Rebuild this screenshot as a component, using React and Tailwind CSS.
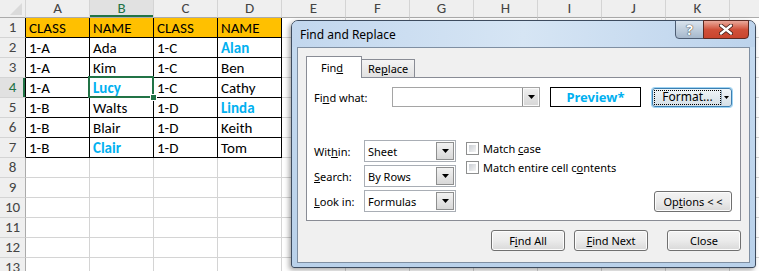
import React from "react";

const COLS = ["A", "B", "C", "D", "E", "F", "G", "H", "I", "J", "K", "L"];

// "*" suffix marks the light-blue bold names
const DATA = [
  ["CLASS", "NAME", "CLASS", "NAME"],
  ["1-A", "Ada", "1-C", "Alan*"],
  ["1-A", "Kim", "1-C", "Ben"],
  ["1-A", "Lucy*", "1-C", "Cathy"],
  ["1-B", "Walts", "1-D", "Linda*"],
  ["1-B", "Blair", "1-D", "Keith"],
  ["1-B", "Clair*", "1-D", "Tom"],
];

const ROWS = 13;

function Sheet() {
  const cells = [];

  // corner
  cells.push(
    <div key="corner" className="relative bg-[#efefef] border-r border-b border-r-[#d4d4d4] border-b-[#ababab]">
      <svg className="absolute right-[3px] bottom-[2px]" width="12" height="12" viewBox="0 0 12 12">
        <polygon points="12,0 12,12 0,12" fill="#dadada" />
      </svg>
    </div>
  );
  COLS.forEach((c) => {
    const sel = c === "B";
    cells.push(
      <div
        key={"h" + c}
        className={
          "flex items-center justify-center border-r border-b border-r-[#d4d4d4] border-b-[#ababab] " +
          (sel ? "bg-[#e1e1e1] text-[#217346] shadow-[inset_0_-2px_0_#217346]" : "bg-[#efefef] text-[#444]")
        }
      >
        {c === "L" ? "" : c}
      </div>
    );
  });

  for (let r = 1; r <= ROWS; r++) {
    const inTable = r <= DATA.length;
    const selRow = r === 4;
    cells.push(
      <div
        key={"r" + r}
        className={
          "flex items-center justify-center border-r border-b border-b-[#d4d4d4] " +
          (inTable ? "border-r-black " : "border-r-[#ababab] ") +
          (selRow ? "bg-[#e1e1e1] text-[#217346] shadow-[inset_-2px_0_0_#217346]" : "bg-[#efefef] text-[#444]")
        }
      >
        {r}
      </div>
    );
    COLS.forEach((c, ci) => {
      const val = inTable && ci < 4 ? DATA[r - 1][ci] : "";
      const table = inTable && ci < 4;
      const blue = val.endsWith("*");
      const text = blue ? val.slice(0, -1) : val;
      const selected = r === 4 && c === "B";
      cells.push(
        <div
          key={c + r}
          className={
            "relative flex items-center px-[3px] pt-[1px] border-r border-b whitespace-nowrap " +
            (table ? "border-black " : "border-[#d4d4d4] ") +
            (r === 1 && table ? "bg-[#ffc000] " : "bg-white ") +
            (blue ? "text-[#00b0f0] font-bold" : "text-black")
          }
        >
          {text}
          {selected && (
            <>
              <div className="absolute -left-[2px] -top-[2px] -right-[1px] -bottom-[1px] border-2 border-[#217346] z-10" />
              <div className="absolute -right-[4px] -bottom-[4px] w-[7px] h-[7px] bg-[#217346] border border-white z-10" />
            </>
          )}
        </div>
      );
    });
  }

  return (
    <div className="grid grid-cols-[26px_repeat(12,64px)] grid-rows-[18px_repeat(13,20px)] text-[15px] leading-none font-['Carlito','Lato',sans-serif]">
      {cells}
    </div>
  );
}

function Arrow({ className = "" }) {
  return (
    <svg className={className} width="7" height="4" viewBox="0 0 7 4">
      <polygon points="0,0 7,0 3.5,4" fill="#000" />
    </svg>
  );
}

function Combo({ value, w = "w-[92px]" }) {
  return (
    <div className={"flex h-[22px] border border-[#a9aeb5] bg-white " + w}>
      <div className="flex-1 flex items-center pl-[3px] text-black">{value}</div>
      <div className="w-[18px] my-[1px] mr-[1px] flex items-center justify-center border border-[#8e8f8f] bg-gradient-to-b from-[#f2f2f2] to-[#d8d8d8]">
        <Arrow />
      </div>
    </div>
  );
}

function Check({ children }) {
  return (
    <div className="flex items-center h-[13px] gap-[4px]">
      <div className="w-[13px] h-[13px] border border-[#8e8f8f] bg-white p-[2px]">
        <div className="w-full h-full bg-gradient-to-br from-[#cbcfd5] to-[#f4f4f4]" />
      </div>
      <span>{children}</span>
    </div>
  );
}

function Btn({ children, className = "" }) {
  return (
    <div
      className={
        "flex items-center justify-center h-[21px] rounded-[3px] border border-[#707070] bg-gradient-to-b from-[#f3f3f3] via-[#ebebeb] to-[#d9d9d9] shadow-[inset_0_0_0_1px_#fcfcfc] text-black " +
        className
      }
    >
      {children}
    </div>
  );
}

function Dialog() {
  return (
    <div className="absolute left-[291px] top-[20px] w-[465px] h-[248px] flex flex-col rounded-t-[7px] rounded-b-[3px] border border-[#3d4b5e] bg-gradient-to-b from-[#c6dbf0] to-[#b9d1ea] shadow-[-2px_2px_5px_rgba(0,0,0,0.35)] font-['Noto_Sans',sans-serif] text-[11px] leading-none text-black">
      {/* title bar */}
      <div className="relative h-[26px] flex items-center pl-[8px] bg-gradient-to-r from-[#c2d7ee] via-[#d6e5f4] to-[#bcd3ec] rounded-t-[6px]">
        <span className="text-[12px] pt-[1px]">Find and Replace</span>
        <div className="absolute right-[6px] -top-[1px] flex">
          <div className="w-[29px] h-[19px] flex items-center justify-center rounded-bl-[4px] border border-[#4d5d73] bg-gradient-to-b from-[#d9e3ee] via-[#c0cedd] to-[#a6b8cc] text-white text-[14px] font-bold [text-shadow:0_0_1px_#333,0_0_1px_#333]">
            ?
          </div>
          <div className="w-[46px] h-[19px] -ml-px flex items-center justify-center rounded-br-[4px] border border-[#5b2a22] bg-gradient-to-b from-[#e9a99b] via-[#d0513a] to-[#c9452e]">
            <svg width="14" height="11" viewBox="0 0 14 11">
              <path d="M2 1.5 L12 9.5 M12 1.5 L2 9.5" stroke="#3a1a14" strokeWidth="4" strokeLinecap="round" />
              <path d="M2 1.5 L12 9.5 M12 1.5 L2 9.5" stroke="#fff" strokeWidth="2.4" strokeLinecap="round" />
            </svg>
          </div>
        </div>
      </div>

      {/* client area */}
      <div className="h-[216px] mx-[5px] border border-[#7f8fa2] bg-[#f0f0f0] flex flex-col px-[8px] pt-[8px]">
        {/* tabs */}
        <div className="flex items-end h-[21px]">
          <div className="relative z-10 -mb-px w-[56px] h-[22px] flex items-center pl-[14px] border border-b-0 border-[#898c95] bg-white">
            Fin<u>d</u>
          </div>
          <div className="w-[53px] h-[18px] flex items-center pl-[6px] border border-l-0 border-b-0 border-[#898c95] bg-gradient-to-b from-[#f4f4f4] to-[#e2e2e2]">
            Re<u>p</u>lace
          </div>
        </div>

        {/* panel */}
        <div className="h-[144px] border border-[#898c95] bg-white flex flex-col pl-[7px] pr-[8px] pt-[9px] pb-[10px]">
          <div className="flex items-center h-[20px]">
            <div className="w-[78px]">
              Fi<u>n</u>d what:
            </div>
            <div className="w-[148px] h-[20px] flex border border-[#a5a5a5] bg-white">
              <div className="flex-1" />
              <div className="w-[17px] flex items-center justify-center border-l border-[#8e8f8f] bg-gradient-to-b from-[#f0f0f0] to-[#d6d6d6] shadow-[inset_0_0_0_1px_#fafafa]">
                <Arrow />
              </div>
            </div>
            <div className="ml-[10px] w-[91px] h-[20px] flex items-center justify-center border border-black text-[#00b0f0] font-bold text-[13px]">
              Preview*
            </div>
            <div className="ml-[11px] w-[80px] h-[19px] flex rounded-[3px] border border-[#3c7fb1] shadow-[0_0_0_1px_#9fd5f5] bg-gradient-to-b from-[#f0f5f8] to-[#d5dfe6] p-[1px]">
              <div className="flex-1 flex items-center justify-center border border-dotted border-black text-[12px]">
                Format...
              </div>
              <div className="w-[9px] flex items-center justify-center border-l border-[#9bb0c2]">
                <svg width="5" height="3" viewBox="0 0 5 3">
                  <polygon points="0,0 5,0 2.5,3" fill="#000" />
                </svg>
              </div>
            </div>
          </div>

          <div className="mt-[33px] flex flex-1">
            <div className="flex flex-col gap-[3px]">
              <div className="flex items-center">
                <div className="w-[50px]">
                  Wit<u>h</u>in:
                </div>
                <Combo value="Sheet" />
              </div>
              <div className="flex items-center">
                <div className="w-[50px]">
                  <u>S</u>earch:
                </div>
                <Combo value="By Rows" />
              </div>
              <div className="flex items-center">
                <div className="w-[50px]">
                  <u>L</u>ook in:
                </div>
                <Combo value="Formulas" />
              </div>
            </div>
            <div className="ml-[10px] pt-[2px] flex flex-col gap-[6px]">
              <Check>
                Match <u>c</u>ase
              </Check>
              <Check>
                Match entire cell c<u>o</u>ntents
              </Check>
            </div>
            <div className="flex-1" />
            <Btn className="self-end w-[78px]">
              Op<u>t</u>ions &lt; &lt;
            </Btn>
          </div>
        </div>

        {/* bottom buttons */}
        <div className="mt-[9px] flex justify-end">
          <Btn className="w-[74px]">
            F<u>i</u>nd All
          </Btn>
          <Btn className="w-[74px] ml-[9px]">
            <u>F</u>ind Next
          </Btn>
          <Btn className="w-[74px] ml-[19px]">Close</Btn>
        </div>
      </div>
    </div>
  );
}

export default function App() {
  return (
    <div className="relative w-[759px] h-[271px] overflow-hidden bg-white">
      <Sheet />
      <Dialog />
    </div>
  );
}
